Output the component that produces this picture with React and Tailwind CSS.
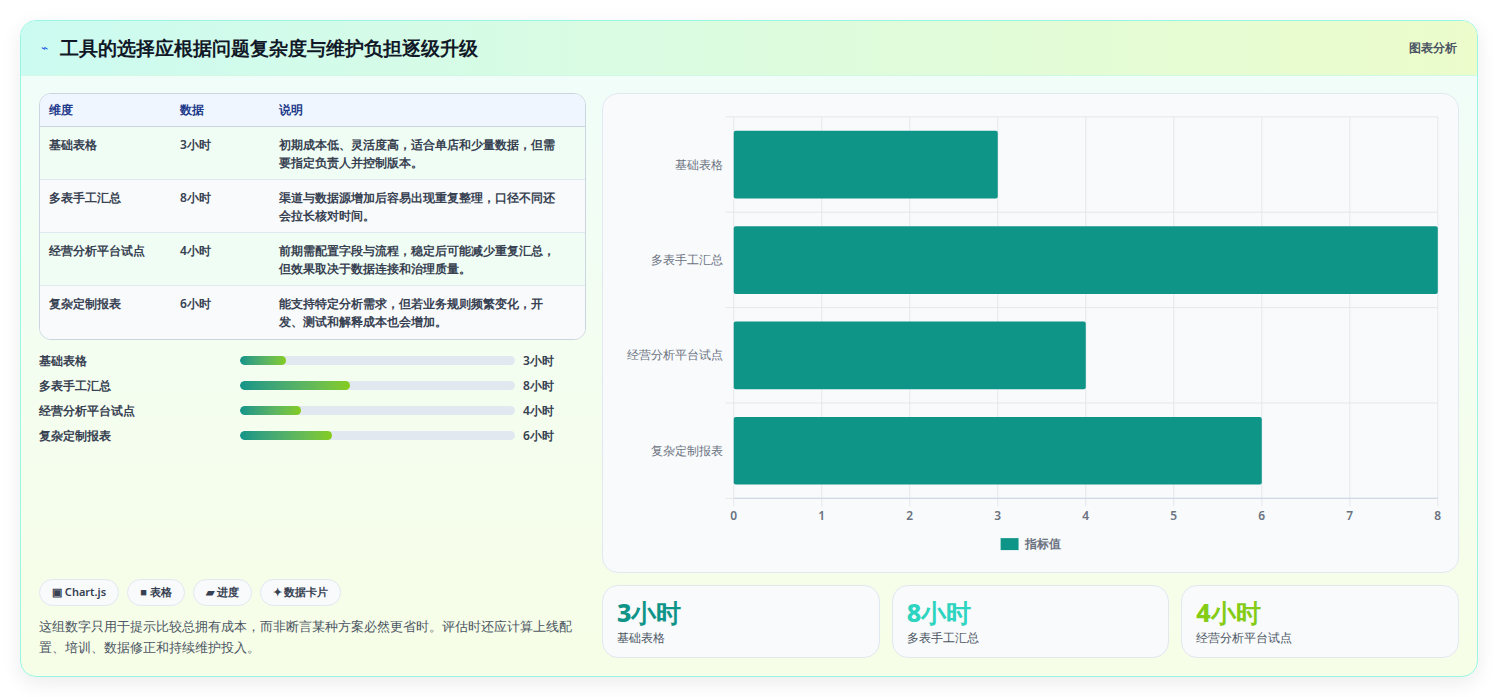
import React from "react";

const rows = [
  { name: "基础表格", value: 3, desc: "初期成本低、灵活度高，适合单店和少量数据，但需要指定负责人并控制版本。" },
  { name: "多表手工汇总", value: 8, desc: "渠道与数据源增加后容易出现重复整理，口径不同还会拉长核对时间。" },
  { name: "经营分析平台试点", value: 4, desc: "前期需配置字段与流程，稳定后可能减少重复汇总，但效果取决于数据连接和治理质量。" },
  { name: "复杂定制报表", value: 6, desc: "能支持特定分析需求，但若业务规则频繁变化，开发、测试和解释成本也会增加。" },
];

const stats = [
  { v: "3小时", label: "基础表格", color: "text-[#0f9488]" },
  { v: "8小时", label: "多表手工汇总", color: "text-[#2dd4bf]" },
  { v: "4小时", label: "经营分析平台试点", color: "text-[#84cc16]" },
];

const Chart = () => {
  const x0 = 130, x1 = 837, y0 = 23, y1 = 406;
  const sx = (v) => x0 + ((x1 - x0) * v) / 8;
  const band = (y1 - y0) / 4;
  return (
    <svg viewBox="0 0 856 480" className="w-full h-full">
      {[0, 1, 2, 3, 4, 5, 6, 7, 8].map((t) => (
        <g key={t}>
          <line x1={sx(t)} x2={sx(t)} y1={y0} y2={y1 + 8} stroke="#e5e7eb" />
          <text x={sx(t)} y={428} textAnchor="middle" fontSize="12" fontWeight="600" fill="#6b7280">{t}</text>
        </g>
      ))}
      {[0, 1, 2, 3, 4].map((i) => (
        <line key={i} x1={x0 - 8} x2={x1} y1={y0 + band * i} y2={y0 + band * i} stroke="#e5e7eb" />
      ))}
      <line x1={x0} x2={x1} y1={y1} y2={y1} stroke="#cbd5e1" />
      {rows.map((r, i) => (
        <g key={r.name}>
          <rect x={x0} y={y0 + band * i + 14} width={sx(r.value) - x0} height={68} fill="#0f9488" rx="2" />
          <text x={119} y={y0 + band * i + band / 2 + 4} textAnchor="end" fontSize="12" fill="#6b7280">{r.name}</text>
        </g>
      ))}
      <rect x={398} y={446} width={18} height={12} fill="#0f9488" />
      <text x={422} y={456} fontSize="12" fontWeight="600" fill="#6b7280">指标值</text>
    </svg>
  );
};

export default function App() {
  return (
    <div className="min-h-screen bg-white p-5 font-['Inter','Noto_Sans_CJK_SC',sans-serif] text-[#1f2937]">
      <div className="rounded-2xl border border-[#99f6e4] overflow-hidden shadow-[0_6px_20px_rgba(0,0,0,0.08)] bg-gradient-to-b from-[#f0fdfa] to-[#f7fee7]">
        <div className="h-[55px] flex items-center justify-between px-5 bg-gradient-to-r from-[#ccfbf1] to-[#ecfccb] border-b border-[#d1fae5]">
          <div className="flex items-center gap-3">
            <span className="text-[#2563eb] text-xs">⌁</span>
            <h1 className="text-[19px] font-bold text-[#111827]">工具的选择应根据问题复杂度与维护负担逐级升级</h1>
          </div>
          <span className="text-xs font-semibold text-[#4b5563]">图表分析</span>
        </div>
        <div className="flex gap-4 px-[18px] pt-[17px] pb-[18px]">
          <div className="w-[547px] flex flex-col">
            <div className="rounded-xl border border-[#cbd5e1] overflow-hidden bg-[#f8fafc]">
              <div className="grid grid-cols-[131px_99px_1fr] h-[33px] items-center px-[9px] bg-[#eff6ff] border-b border-[#cbd5e1] text-xs font-semibold text-[#1e3a8a]">
                <span>维度</span><span>数据</span><span>说明</span>
              </div>
              {rows.map((r, i) => (
                <div key={r.name} className={`grid grid-cols-[131px_99px_1fr] h-[53px] px-[9px] pt-[9px] text-xs font-semibold text-[#374151] leading-[18px] ${i % 2 ? "bg-[#f8fafc]" : "bg-[#f0fdf4]"} ${i < 3 ? "border-b border-[#e2e8f0]" : ""}`}>
                  <span>{r.name}</span><span>{r.value}小时</span><span className="pr-3">{r.desc}</span>
                </div>
              ))}
            </div>
            <div className="mt-[8px] flex flex-col">
              {rows.map((r) => (
                <div key={r.name} className="h-[25px] flex items-center text-xs font-semibold text-[#374151]">
                  <span className="w-[201px]">{r.name}</span>
                  <div className="w-[275px] h-[9px] rounded-full bg-[#e2e8f0] overflow-hidden">
                    <div className="h-full rounded-full bg-gradient-to-r from-[#0f9488] to-[#84cc16]" style={{ width: `${(r.value / 3) * 16.7 * (r.value === 8 ? 0.9 : 1)}%` }} />
                  </div>
                  <span className="ml-2">{r.value}小时</span>
                </div>
              ))}
            </div>
            <div className="mt-auto flex gap-2 text-[11px] font-semibold text-[#374151]">
              {["▣ Chart.js", "■ 表格", "▰ 进度", "✦ 数据卡片"].map((c) => (
                <span key={c} className="h-[27px] px-3 flex items-center rounded-full bg-[#f8fafc] border border-[#e2e8f0]">{c}</span>
              ))}
            </div>
            <p className="mt-[10px] text-[13px] leading-[21px] text-[#4b5563] font-medium">这组数字只用于提示比较总拥有成本，而非断言某种方案必然更省时。评估时还应计算上线配置、培训、数据修正和持续维护投入。</p>
          </div>
          <div className="flex-1 flex flex-col gap-3">
            <div className="h-[480px] rounded-2xl border border-[#e2e8f0] bg-[#f8fafc]">
              <Chart />
            </div>
            <div className="grid grid-cols-3 gap-3">
              {stats.map((s) => (
                <div key={s.label} className="h-[73px] rounded-2xl border border-[#e2e8f0] bg-[#f8fafc] px-[14px] pt-[10px]">
                  <div className={`text-[25px] font-extrabold leading-[32px] ${s.color}`}>{s.v}</div>
                  <div className="text-xs text-[#4b5563] font-medium mt-0.5">{s.label}</div>
                </div>
              ))}
            </div>
          </div>
        </div>
      </div>
    </div>
  );
}
